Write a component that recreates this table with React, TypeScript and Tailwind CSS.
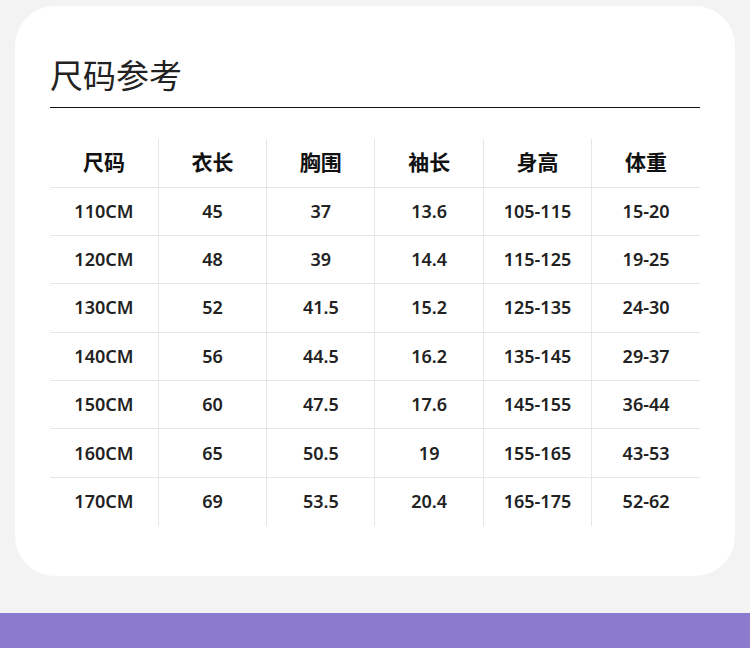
const headers = ["尺码", "衣长", "胸围", "袖长", "身高", "体重"];

const rows = [
  ["110CM", "45", "37", "13.6", "105-115", "15-20"],
  ["120CM", "48", "39", "14.4", "115-125", "19-25"],
  ["130CM", "52", "41.5", "15.2", "125-135", "24-30"],
  ["140CM", "56", "44.5", "16.2", "135-145", "29-37"],
  ["150CM", "60", "47.5", "17.6", "145-155", "36-44"],
  ["160CM", "65", "50.5", "19", "155-165", "43-53"],
  ["170CM", "69", "53.5", "20.4", "165-175", "52-62"],
];

const App = () => {
  return (
    <main className="w-[750px] h-[648px] bg-[#f3f3f3] flex flex-col font-['Noto_Sans','Noto_Sans_CJK_SC',sans-serif] overflow-hidden">
      <div className="mt-[6px] mx-[15px] h-[570px] bg-white rounded-[40px] px-[35px] pt-[50px]">
        <h1 className="text-[33px] leading-[40px] text-[#222] font-normal">尺码参考</h1>
        <div className="mt-[11px] h-px bg-[#111]" />

        <table className="mt-[31px] w-[650px] table-fixed border-collapse">
          <thead>
            <tr className="h-[48px] border-b border-[#e6e6e6]">
              {headers.map((h, i) => (
                <th
                  key={h}
                  className={`text-[21px] font-bold text-[#111] text-center ${i > 0 ? "border-l border-[#e6e6e6]" : ""}`}
                >
                  {h}
                </th>
              ))}
            </tr>
          </thead>
          <tbody>
            {rows.map((r, ri) => (
              <tr
                key={r[0]}
                className={`h-[48.4px] ${ri < rows.length - 1 ? "border-b border-[#e6e6e6]" : ""}`}
              >
                {r.map((c, i) => (
                  <td
                    key={i}
                    className={`text-[18px] font-semibold text-[#222] text-center ${i > 0 ? "border-l border-[#e6e6e6]" : ""}`}
                  >
                    {c}
                  </td>
                ))}
              </tr>
            ))}
          </tbody>
        </table>
      </div>

      <div className="mt-[37px] flex-1 bg-[#8a7bcf]" />
    </main>
  );
};

export default App;
